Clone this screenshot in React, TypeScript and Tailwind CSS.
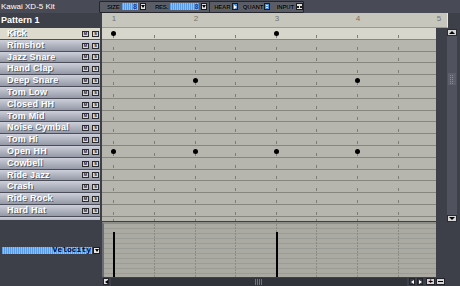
import React from 'react';

const INSTRUMENTS = [
  'Kick', 'Rimshot', 'Jazz Snare', 'Hand Clap', 'Deep Snare', 'Tom Low', 'Closed HH', 'Tom Mid',
  'Noise Cymbal', 'Tom Hi', 'Open HH', 'Cowbell', 'Ride Jazz', 'Crash', 'Ride Rock', 'Hard Hat',
];

// row heights follow the 11.8px pitch of the editor
const ROW_H = [12, 12, 11, 12, 12, 12, 12, 11, 12, 12, 12, 12, 11, 12, 12, 12];

// notes by half-beat index
const NOTES: Record<string, number[]> = {
  Kick: [0, 4],
  'Deep Snare': [2, 6],
  'Open HH': [0, 2, 4, 6],
};

const tickX = (k: number) => Math.round(11.3 + k * 40.6);
const TICKS = [0, 1, 2, 3, 4, 5, 6, 7].map(tickX);

const lcd = 'bg-[repeating-linear-gradient(90deg,#5b9ae6_0px,#5b9ae6_1px,#8fc0f4_1px,#8fc0f4_2px)]';

function DownBtn({ className = '' }: { className?: string }) {
  return (
    <span className={`flex items-center justify-center bg-[#e6e6e6] border border-[#1c1c1c] ${className}`}>
      <span className="h-0 w-0 border-x-[2px] border-x-transparent border-t-[3px] border-t-black" />
    </span>
  );
}

function Toolbar() {
  const label = 'text-[6px] font-bold leading-none tracking-[-0.2px] text-black [text-shadow:0_0_1px_#9a9ca2]';
  return (
    <div className="flex h-[12px] w-[205px] items-center rounded-[1px] border border-[#24262c] bg-[#5a5d65]">
      <span className={`ml-[7px] ${label}`}>SIZE</span>
      <span className={`ml-[2px] flex h-[7px] w-[19px] items-center justify-end pr-[1px] ${lcd}`}>
        <span className="text-[7px] font-bold leading-none text-[#1c3b8c]">8</span>
      </span>
      <DownBtn className="ml-[2px] h-[7px] w-[6px]" />
      <span className={`ml-[9px] ${label}`}>RES.</span>
      <span className={`ml-[2px] flex h-[7px] w-[34px] items-center justify-end pr-[1px] ${lcd}`}>
        <span className="text-[7px] font-bold leading-none text-[#1c3b8c]">8</span>
      </span>
      <DownBtn className="ml-[2px] h-[7px] w-[6px]" />
      <span className="ml-[2px] h-[10px] w-px bg-[#2a2c32]" />
      <span className={`ml-[4px] ${label}`}>HEAR</span>
      <span className="ml-[2px] flex h-[7px] w-[6px] items-center justify-center border border-[#1c1c1c] bg-[#4b8fe0]">
        <span className="h-0 w-0 border-y-[2px] border-y-transparent border-l-[3px] border-l-white" />
      </span>
      <span className={`ml-[5px] ${label}`}>QUANT</span>
      <span className="ml-[1px] flex h-[7px] w-[6px] flex-col justify-center gap-[1px] border border-[#1c1c1c] bg-[#4b8fe0] px-[1px]">
        <span className="h-px bg-[#d8e8fa]" />
        <span className="h-px bg-[#d8e8fa]" />
      </span>
      <span className={`ml-[7px] ${label}`}>INPUT</span>
      <span className="ml-[2px] flex h-[7px] w-[8px] items-center justify-center gap-[1px] border border-[#1c1c1c] bg-[#e2e2e2]">
        <span className="h-[2px] w-[2px] bg-[#222]" />
        <span className="h-[2px] w-[2px] bg-[#222]" />
      </span>
    </div>
  );
}

function Ruler() {
  return (
    <div className="relative h-[15px] w-[346px] border-r border-[#e8e8e0] bg-[#c6c6bc] border-b border-b-[#9a9a92]">
      {[0, 1, 2, 3, 4].map((b) => (
        <span
          key={b}
          className="absolute top-[2px] -translate-x-1/2 text-[8px] leading-none text-[#74746e]"
          style={{ left: Math.round(11.3 + b * 81.2) + 1 }}
        >
          {b + 1}
        </span>
      ))}
    </div>
  );
}

function InstrumentRow({ name, h, selected }: { name: string; h: number; selected: boolean }) {
  return (
    <div
      className={`flex w-[100px] items-center border-b border-[#4b4e58] pl-[7px] ${h === 11 ? 'h-[11px]' : 'h-[12px]'} ${
        selected ? 'bg-[#dcdbcd]' : 'bg-gradient-to-b from-[#cdd0da] to-[#9599a7]'
      }`}
    >
      <span className="flex-1 text-[9px] font-bold leading-none tracking-[0.2px] text-white [text-shadow:1px_1px_0_#5a5d68]">
        {name}
      </span>
      <span className="flex h-[6px] w-[7px] items-center justify-center border border-[#2a2a2a] bg-[#d8d8d8] text-[4px] font-bold leading-none text-[#111]">
        M
      </span>
      <span className="ml-[3px] mr-[1px] flex h-[6px] w-[7px] items-center justify-center border border-[#2a2a2a] bg-[#d8d8d8] text-[4px] font-bold leading-none text-[#111]">
        S
      </span>
    </div>
  );
}

function GridRow({ name, h, selected }: { name: string; h: number; selected: boolean }) {
  const notes = NOTES[name] ?? [];
  return (
    <div
      className={`relative border-b border-[#86867f] ${h === 11 ? 'h-[11px]' : 'h-[12px]'} ${
        selected ? 'bg-[#d6d6cc]' : 'bg-[#b6b6ae]'
      }`}
    >
      {TICKS.map((x) => (
        <span key={x} className="absolute bottom-[1px] h-[3px] w-px bg-[#7d7d77]" style={{ left: x }} />
      ))}
      {notes.map((k) => (
        <span
          key={k}
          className="absolute top-[3px] h-[5px] w-[5px] rounded-full bg-black"
          style={{ left: tickX(k) - 2 }}
        />
      ))}
    </div>
  );
}

function VScroll() {
  return (
    <div className="flex h-full w-[10px] flex-col pt-[1px]">
      <span className="flex h-[7px] items-center justify-center border border-[#2a2c32] bg-[#d6d6d6]">
        <span className="h-0 w-0 border-x-[3px] border-x-transparent border-b-[3px] border-b-black" />
      </span>
      <div className="flex flex-1 flex-col bg-[#50535e] pt-[37px]">
        <span className="mx-[1px] flex h-[12px] flex-col justify-center gap-[1px] bg-[#5d606b] px-[2px]">
          {[0, 1, 2, 3, 4].map((i) => (
            <span key={i} className="h-px bg-[repeating-linear-gradient(90deg,#8a8d98_0px,#8a8d98_1px,transparent_1px,transparent_2px)]" />
          ))}
        </span>
      </div>
      <span className="flex h-[7px] items-center justify-center border border-[#2a2c32] bg-[#d6d6d6]">
        <span className="h-0 w-0 border-x-[3px] border-x-transparent border-t-[3px] border-t-black" />
      </span>
    </div>
  );
}

function VelocityEditor() {
  return (
    <div className="relative h-[55px] w-[334px] border-t-2 border-[#8e8e88] border-l-2 border-l-[#6a6d76] bg-[repeating-linear-gradient(180deg,#aaaaa3_0px,#aaaaa3_4px,#9c9c96_4px,#9c9c96_5px)]">
      {TICKS.slice(1).map((x) => (
        <span
          key={x}
          className="absolute bottom-0 top-0 w-px bg-[repeating-linear-gradient(180deg,#8b8b84_0px,#8b8b84_2px,transparent_2px,transparent_3px)]"
          style={{ left: x - 2 }}
        />
      ))}
      {NOTES.Kick.map((k) => (
        <span key={k} className="absolute bottom-0 top-[8px] w-[2px] bg-black" style={{ left: tickX(k) - 2 }} />
      ))}
    </div>
  );
}

function ArrowBtn({ dir, light }: { dir: 'l' | 'r'; light?: boolean }) {
  return (
    <span
      className={`flex h-[7px] w-[6px] items-center justify-center border border-[#22242a] ${
        light ? 'bg-[#e0e0e0]' : 'bg-[#3a3c44]'
      }`}
    >
      {dir === 'l' ? (
        <span className={`h-0 w-0 border-y-[2px] border-y-transparent border-r-[3px] ${light ? 'border-r-black' : 'border-r-white'}`} />
      ) : (
        <span className="h-0 w-0 border-y-[2px] border-y-transparent border-l-[3px] border-l-white" />
      )}
    </span>
  );
}

export default function App() {
  return (
    <div className="flex h-[286px] w-[460px] flex-col overflow-hidden bg-[#3d4049] font-['Liberation_Sans',sans-serif]">
      {/* title + toolbar */}
      <div className="flex h-[13px] items-center bg-[#484b55]">
        <div className="w-[99px] pl-[1px] text-[8px] leading-none text-white">Kawai XD-5 Kit</div>
        <Toolbar />
      </div>

      {/* pattern name + ruler */}
      <div className="flex h-[15px]">
        <div className="flex w-[102px] items-center pl-[1px] text-[9px] font-bold leading-none text-white">
          Pattern 1
        </div>
        <Ruler />
      </div>

      {/* instruments + note grid */}
      <div className="flex h-[194px]">
        <div className="flex w-[102px] flex-col">
          {INSTRUMENTS.map((name, i) => (
            <InstrumentRow key={name} name={name} h={ROW_H[i]} selected={i === 0} />
          ))}
          <div className="h-[3px] w-[100px] bg-gradient-to-b from-[#cdd0da] to-[#b0b4c0]" />
        </div>
        <div className="flex w-[334px] flex-col">
          {INSTRUMENTS.map((name, i) => (
            <GridRow key={name} name={name} h={ROW_H[i]} selected={i === 0} />
          ))}
          <div className="relative h-[4px] bg-[#b6b6ae]">
            {TICKS.map((x) => (
              <span key={x} className="absolute bottom-0 h-[2px] w-px bg-[#7d7d77]" style={{ left: x }} />
            ))}
          </div>
        </div>
        <div className="w-[11px]" />
        <VScroll />
      </div>

      {/* velocity */}
      <div className="flex h-[55px]">
        <div className="flex w-[102px] items-center pl-[2px] pt-[1px]">
          <span className={`flex h-[7px] w-[90px] items-center justify-end pr-[1px] ${lcd}`}>
            <span className="font-['Liberation_Mono',monospace] text-[8px] font-bold leading-none text-[#000a30]">
              Velocity
            </span>
          </span>
          <DownBtn className="ml-[1px] h-[7px] w-[7px]" />
        </div>
        <VelocityEditor />
      </div>

      {/* bottom scroll bar */}
      <div className="flex h-[9px] items-center">
        <div className="w-[103px]" />
        <ArrowBtn dir="l" light />
        <div className="ml-[2px] flex h-[8px] w-[296px] items-center justify-center bg-[#31333b]">
          <span className="h-[6px] w-[8px] bg-[repeating-linear-gradient(90deg,#70737e_0px,#70737e_1px,transparent_1px,transparent_2px)]" />
        </div>
        <span className="ml-[2px]" />
        <ArrowBtn dir="l" />
        <span className="ml-[2px]" />
        <ArrowBtn dir="r" />
        <span className="ml-[3px] flex h-[7px] w-[9px] items-center justify-center border border-[#22242a] bg-[#d6d6d6] text-[8px] font-bold leading-none text-black">
          +
        </span>
        <span className="ml-[1px] flex h-[7px] w-[9px] items-center justify-center border border-[#22242a] bg-[#d6d6d6]">
          <span className="h-px w-[5px] bg-black" />
        </span>
      </div>
    </div>
  );
}
